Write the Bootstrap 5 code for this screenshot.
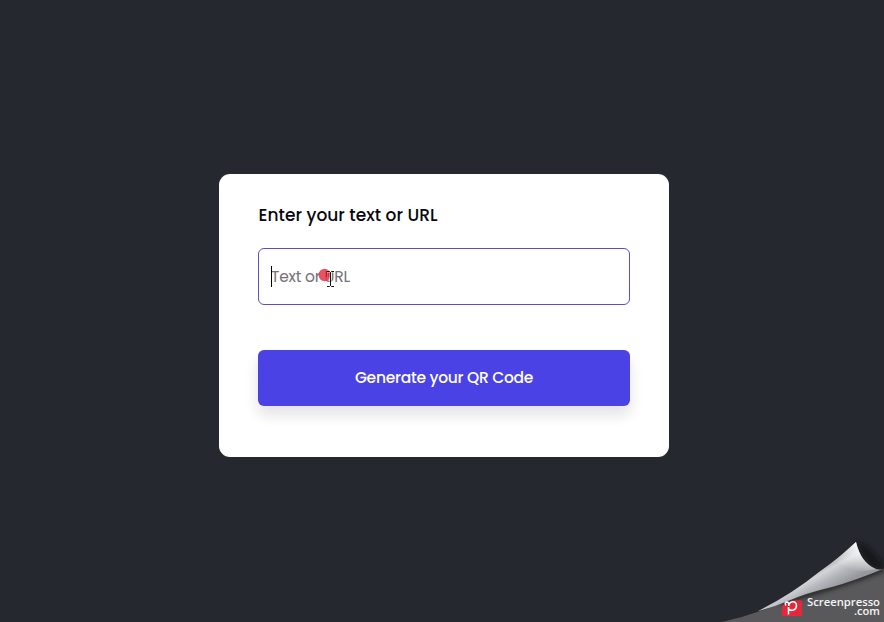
<!DOCTYPE html>
<html lang="en">
<head>
<meta charset="utf-8">
<meta name="viewport" content="width=device-width, initial-scale=1">
<title>QR Code Generator</title>
<link href="https://cdn.jsdelivr.net/npm/bootstrap@5.3.0/dist/css/bootstrap.min.css" rel="stylesheet">
<style>
body{background:#26282f;font-family:Poppins,Inter,"Open Sans",sans-serif;color:#08060f;overflow:hidden}
.stage{padding:9px 0 0 4px}
.qr-box{width:450px;height:283px;padding:29px 39px 0;border-radius:11px}
.qr-title{font-size:17px;font-weight:500;line-height:24px;margin-bottom:21px;padding-left:.6px;letter-spacing:.03px}
.qr-input,.qr-input:focus{height:57px;border:1px solid #5c50bd;border-radius:6px;padding:0 12px;font-size:15.500px;letter-spacing:-.24px;box-shadow:none}
.qr-input::placeholder{color:#757278;opacity:1}
.qr-btn{height:56px;margin-top:45px;background:#4a42e4;border:0;border-radius:6px;font-size:15.500px;font-weight:500;letter-spacing:-.27px;box-shadow:0 9px 14px rgba(30,15,40,.12)}
.text-caret{left:13px;top:18px;width:1px;height:21px;background:#000}
.pointer{left:59px;top:18px}
</style>
</head>
<body>
<main class="stage vh-100 d-flex align-items-center justify-content-center">
  <form class="qr-box bg-white">
    <label class="qr-title d-block" for="qr">Enter your text or URL</label>
    <div class="position-relative">
      <input id="qr" class="qr-input form-control" type="text" placeholder="Text or URL">
      <span class="text-caret position-absolute"></span>
      <svg class="pointer position-absolute" width="22" height="24" viewBox="0 0 22 24">
        <circle cx="7.700" cy="9" r="6.200" fill="#e64052" fill-opacity=".9"/>
        <path d="M9.500 5v6M12 5v6" stroke="#9c2234" stroke-width="1"/>
        <path d="M10 5.500h2.500l1 1 1-1H17M13.500 6.500v13M10 20.500h2.500l1-1 1 1H17" fill="none" stroke="#fff" stroke-width="2.500" stroke-opacity=".5"/>
        <path d="M10 5.500h2.500l1 1 1-1H17M13.500 6.500v13M10 20.500h2.500l1-1 1 1H17" fill="none" stroke="#111"/>
      </svg>
    </div>
    <button class="qr-btn btn btn-primary w-100" type="button">Generate your QR Code</button>
  </form>
</main>
<svg class="position-absolute bottom-0 end-0" width="170" height="90" viewBox="0 0 170 90">
  <defs>
    <linearGradient id="curl" x1="105" y1="33" x2="119" y2="58" gradientUnits="userSpaceOnUse">
      <stop offset="0" stop-color="#a0a2a7"/><stop offset=".3" stop-color="#d3d4d8"/><stop offset=".6" stop-color="#b4b6bb"/><stop offset="1" stop-color="#96989d"/>
    </linearGradient>
    <linearGradient id="tip" x1="142" y1="10" x2="132" y2="36" gradientUnits="userSpaceOnUse">
      <stop offset="0" stop-color="#fff"/><stop offset="1" stop-color="#fff" stop-opacity="0"/>
    </linearGradient>
    <filter id="soft" x="-30%" y="-30%" width="160%" height="160%"><feGaussianBlur stdDeviation="2"/></filter>
    <clipPath id="under"><path d="M8 90Q40 83 72 69L170 37V90Z"/></clipPath>
  </defs>
  <path d="M143 10Q156 12 169 32V37H162Q151 34 143 10Z" fill="#0c0c10" opacity=".6" filter="url(#soft)"/>
  <path d="M8 90Q40 83 72 69L170 37V90Z" fill="#59595b"/>
  <g clip-path="url(#under)"><path d="M66 70Q125 54 170 37" fill="none" stroke="#29292c" stroke-width="6" filter="url(#soft)"/></g>
  <path d="M44 79Q78 62 105 40Q125 26 142 10Q147 31 162 37Q166 38 170 36.500Q140 49 118 55Q92 61 74 69Q60 75 44 79Z" fill="url(#curl)"/>
  <path d="M114 34Q129 22 142 10Q147 31 162 37Q140 43 114 34Z" fill="url(#tip)"/>
  <path d="M68 74L78 68.500H88V84H68Z" fill="#e3283c"/>
  <path d="M74.500 82.500V75M72 73.500Q70 70.500 73 70Q75 70 74.800 74M74.800 74C75 69 82.500 68 82.500 73.500C82.500 78.500 77 79.500 74.800 77" fill="none" stroke="#fff" stroke-width="1.500"/>
  <g fill="#f5f5f5" font-family="Open Sans,sans-serif" font-weight="600" font-size="11.500">
    <text x="93" y="73.500" textLength="73" lengthAdjust="spacingAndGlyphs">Screenpresso</text>
    <text x="140" y="82.500" textLength="26" lengthAdjust="spacingAndGlyphs">.com</text>
  </g>
</svg>
<script src="https://cdn.jsdelivr.net/npm/bootstrap@5.3.0/dist/js/bootstrap.bundle.min.js"></script>
</body>
</html>
